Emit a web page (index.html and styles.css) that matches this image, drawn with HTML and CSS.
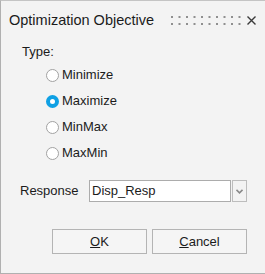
FILE: index.html
```html
<!DOCTYPE html>
<html lang="en">

<head>
    <meta charset="UTF-8">
    <title>Optimization Objective</title>
    <link rel="stylesheet" href="styles.css">
</head>

<body>

    <div class="dialog">
        <div class="titlebar">
            <span class="title">Optimization Objective</span>
            <svg class="grip" width="70" height="9" viewBox="0 0 70 9">
                <g fill="#8f8f8f">
                    <rect x="0" y="0" width="2" height="2"/><rect x="7.5" y="0" width="2" height="2"/>
                    <rect x="15" y="0" width="2" height="2"/><rect x="22.5" y="0" width="2" height="2"/>
                    <rect x="30" y="0" width="2" height="2"/><rect x="37.5" y="0" width="2" height="2"/>
                    <rect x="45" y="0" width="2" height="2"/><rect x="52.5" y="0" width="2" height="2"/>
                    <rect x="60" y="0" width="2" height="2"/><rect x="67.5" y="0" width="2" height="2"/>
                    <rect x="0" y="7" width="2" height="2"/><rect x="7.5" y="7" width="2" height="2"/>
                    <rect x="15" y="7" width="2" height="2"/><rect x="22.5" y="7" width="2" height="2"/>
                    <rect x="30" y="7" width="2" height="2"/><rect x="37.5" y="7" width="2" height="2"/>
                    <rect x="45" y="7" width="2" height="2"/><rect x="52.5" y="7" width="2" height="2"/>
                    <rect x="60" y="7" width="2" height="2"/><rect x="67.5" y="7" width="2" height="2"/>
                </g>
            </svg>
            <svg class="close" width="9" height="9" viewBox="0 0 9 9">
                <path d="M0.5 0.5 L8.5 8.5 M8.5 0.5 L0.5 8.5" stroke="#3a3a3a" stroke-width="1.4" fill="none"/>
            </svg>
        </div>

        <div class="type-label">Type:</div>

        <div class="radio-group">
            <label class="radio-row"><span class="radio"></span>Minimize</label>
            <label class="radio-row"><span class="radio checked"></span>Maximize</label>
            <label class="radio-row"><span class="radio"></span>MinMax</label>
            <label class="radio-row"><span class="radio"></span>MaxMin</label>
        </div>

        <div class="response-row">
            <span class="response-label">Response</span>
            <div class="combo">
                <div class="combo-field">Disp_Resp</div>
                <div class="combo-btn">
                    <svg width="7" height="5" viewBox="0 0 7 5">
                        <path d="M0.5 0.8 L3.5 3.8 L6.5 0.8" stroke="#8a8a8a" stroke-width="1.6" fill="none"/>
                    </svg>
                </div>
            </div>
        </div>

        <div class="buttons">
            <button class="btn"><u>O</u>K</button>
            <button class="btn"><u>C</u>ancel</button>
        </div>
    </div>

</body>

</html>
```

FILE: styles.css
```css
* {
    margin: 0;
    padding: 0;
    box-sizing: border-box;
    font-family: 'Liberation Sans', Arial, sans-serif;
}

body {
    background: #f3f3f3;
    color: #1b1b1b;
    font-size: 13px;
    line-height: 16px;
}

.dialog {
    width: 265px;
    height: 274px;
    background: #f3f3f3;
    border-top: 1px solid #c4c4c4;
    border-left: 1px solid #b0b0b0;
    border-bottom: 1px solid #b0b0b0;
    display: flex;
    flex-direction: column;
}

.titlebar {
    height: 38px;
    display: flex;
    align-items: center;
    padding: 0 9px 0 8px;
}

.title {
    font-size: 14.5px;
}

.grip {
    margin-left: auto;
    margin-top: 0;
}

.close {
    margin-left: 6px;
}

.type-label {
    margin: 5px 0 0 21px;
}

.radio-group {
    margin: 2px 0 0 45px;
    display: flex;
    flex-direction: column;
}

.radio-row {
    height: 26px;
    display: flex;
    align-items: center;
    gap: 3px;
}

.radio {
    width: 13px;
    height: 13px;
    border-radius: 50%;
    border: 1px solid #a2a2a2;
    background: #fff;
}

.radio.checked {
    border: 4px solid #0fa0e4;
}

.response-row {
    margin: 14px 0 0 19px;
    display: flex;
    align-items: center;
}

.response-label {
    width: 69px;
}

.combo {
    display: flex;
    gap: 1px;
    height: 22px;
}

.combo-field {
    width: 142px;
    background: #fff;
    border: 1px solid #acacac;
    padding-left: 2px;
    display: flex;
    align-items: center;
}

.combo-btn {
    width: 15px;
    border: 1px solid #bdbdbd;
    background: #f3f3f3;
    display: flex;
    align-items: center;
    justify-content: center;
}

.buttons {
    margin: 27px 0 0 51px;
    display: flex;
    gap: 5px;
}

.btn {
    width: 95px;
    height: 25px;
    background: #f5f5f5;
    border: 1px solid #b4b4b4;
    font-size: 13px;
    color: #1b1b1b;
}
```
